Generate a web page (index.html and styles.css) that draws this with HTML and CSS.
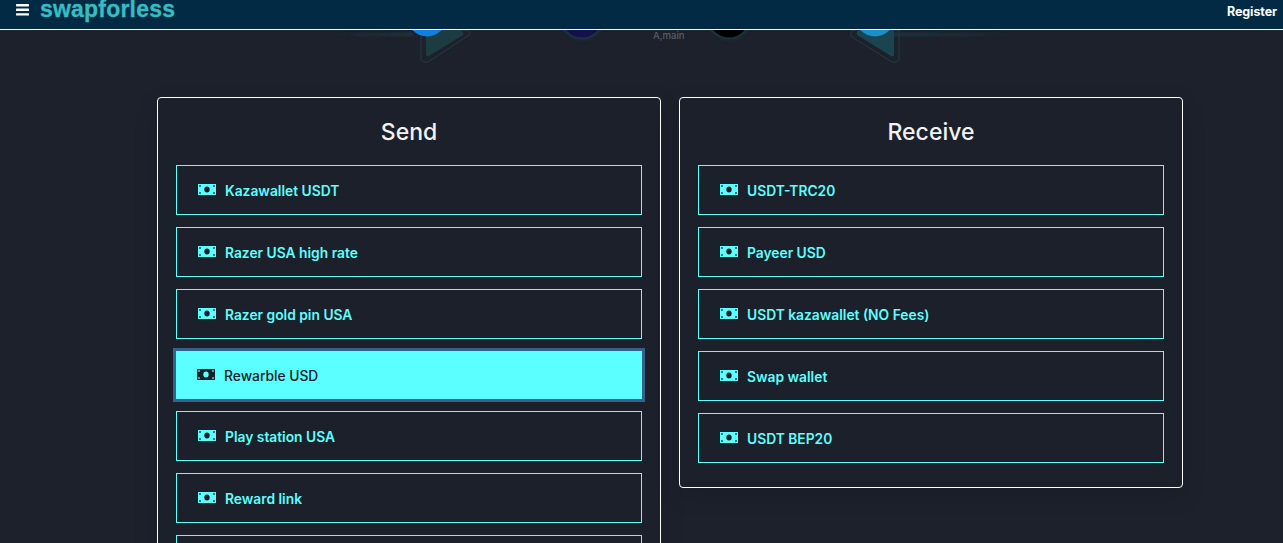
FILE: index.html
```html
<!DOCTYPE html>
<html lang="en">
<head>
<meta charset="utf-8">
<title>swapforless</title>
<link rel="stylesheet" href="styles.css">
</head>
<body>
<svg class="defs" width="0" height="0" aria-hidden="true">
  <symbol id="bill" viewBox="0 0 18 11">
    <path fill-rule="evenodd" d="M0 0h18v11H0zM9 2.600a2.700 2.900 0 1 0 0 5.800 2.700 2.900 0 0 0 0-5.800zM1.200 1.200v1.600h1.600V1.200zM15.200 1.200v1.600h1.600V1.200zM1.200 8.200v1.600h1.600V8.200zM15.200 8.200v1.600h1.600V8.200z"/>
  </symbol>
</svg>
<header class="topbar">
  <div class="brand">
    <svg class="burger" viewBox="0 0 13 12" width="13" height="12" aria-hidden="true">
      <rect y="0" width="13" height="2.400" rx=".6"/><rect y="4.600" width="13" height="2.400" rx=".6"/><rect y="9.200" width="13" height="2.400" rx=".6"/>
    </svg>
    <span class="logo">swapforless</span>
  </div>
  <a class="register">Register</a>
</header>
<div class="hero">
  <svg class="hero-art" viewBox="0 0 1283 67" width="1283" height="67" aria-hidden="true">
    <defs>
      <filter id="soft" x="-30%" y="-30%" width="160%" height="160%"><feGaussianBlur stdDeviation="2"/></filter>
      <filter id="softer" x="-10%" y="-300%" width="120%" height="700%"><feGaussianBlur stdDeviation="1.500"/></filter>
      <linearGradient id="fadeL" x1="0" x2="1" y1="0" y2="0"><stop offset="0" stop-color="#1f4a52" stop-opacity="0"/><stop offset="1" stop-color="#1f4a52" stop-opacity=".6"/></linearGradient>
      <linearGradient id="fadeR" x1="1" x2="0" y1="0" y2="0"><stop offset="0" stop-color="#1f4a52" stop-opacity="0"/><stop offset="1" stop-color="#1f4a52" stop-opacity=".6"/></linearGradient>
    </defs>
    <rect x="335" y="3" width="78" height="3" fill="url(#fadeL)" filter="url(#softer)"/>
    <rect x="893" y="3" width="120" height="3" fill="url(#fadeR)" filter="url(#softer)"/>
    <path d="M421 0V29Q421 33 428 32L469 5Q472 1 467 0Z" fill="none" stroke="#263a40" stroke-width="1"/>
    <path d="M426 0V25Q426 27 429 26L463 5Q465 2 460 0Z" fill="#1c3c42"/>
    <path d="M899 0V29Q899 33 892 32L852 7Q849 2 853 0Z" fill="none" stroke="#263a40" stroke-width="1"/>
    <path d="M894 0V25Q894 27 891 26L857 5Q855 2 860 0Z" fill="#1a4550"/>
    <circle cx="427" cy="-13" r="19.500" fill="#0f7fe0"/>
    <circle cx="875" cy="-13" r="19.500" fill="#1b8fca"/>
    <circle cx="582" cy="-13" r="21" fill="#1f6a72" opacity=".6" filter="url(#soft)"/>
    <circle cx="582" cy="-13" r="20.500" fill="#140f4d"/>
    <circle cx="729" cy="-13" r="21" fill="#1f6a72" opacity=".6" filter="url(#soft)"/>
    <circle cx="729" cy="-13" r="20.500" fill="#000"/>
  </svg>
  <span class="hero-label">A,main</span>
</div>
<main class="panels">
  <section class="card">
    <h2 class="card-title">Send</h2>
    <ul class="options">
      <li class="option"><svg class="bill"><use href="#bill"/></svg>Kazawallet USDT</li>
      <li class="option"><svg class="bill"><use href="#bill"/></svg>Razer USA high rate</li>
      <li class="option"><svg class="bill"><use href="#bill"/></svg>Razer gold pin USA</li>
      <li class="option option-active"><svg class="bill"><use href="#bill"/></svg>Rewarble USD</li>
      <li class="option"><svg class="bill"><use href="#bill"/></svg>Play station USA</li>
      <li class="option"><svg class="bill"><use href="#bill"/></svg>Reward link</li>
      <li class="option"></li>
    </ul>
  </section>
  <section class="card">
    <h2 class="card-title">Receive</h2>
    <ul class="options">
      <li class="option"><svg class="bill"><use href="#bill"/></svg>USDT-TRC20</li>
      <li class="option"><svg class="bill"><use href="#bill"/></svg>Payeer USD</li>
      <li class="option"><svg class="bill"><use href="#bill"/></svg>USDT kazawallet (NO Fees)</li>
      <li class="option"><svg class="bill"><use href="#bill"/></svg>Swap wallet</li>
      <li class="option"><svg class="bill"><use href="#bill"/></svg>USDT BEP20</li>
    </ul>
  </section>
</main>
</body>
</html>
```
FILE: styles.css
```css
* { box-sizing: border-box; }
html, body { height: 100%; overflow: hidden; }
body {
  margin: 0;
  background: #1c212b;
  font-family: Inter, "Open Sans", sans-serif;
  color: #fff;
}
.defs { display: block; height: 0; }
.topbar {
  height: 30px;
  background: #022a45;
  border-bottom: 1px solid #fff;
  display: flex;
  align-items: flex-start;
  justify-content: space-between;
  padding: 0 6px 0 16px;
}
.brand { display: flex; align-items: flex-start; gap: 11px; }
.burger { fill: #fff; margin-top: 4px; }
.logo {
  font-family: "Liberation Sans", Arial, sans-serif;
  font-weight: 700;
  font-size: 23px;
  line-height: 19px;
  letter-spacing: .2px;
  color: #35bdc3;
  -webkit-text-stroke: .3px #35bdc3;
}
.register { font-size: 12.500px; font-weight: 700; line-height: 16px; margin-top: 4px; letter-spacing: -.1px; }
.hero { height: 67px; position: relative; overflow: hidden; }
.hero-art { position: absolute; left: 0; top: 0; }
.hero-label {
  position: absolute;
  left: 653px;
  top: 0;
  font-size: 9.500px;
  line-height: 11px;
  color: #5a5e68;
  font-weight: 500;
}
.panels {
  display: flex;
  justify-content: center;
  align-items: flex-start;
  gap: 18px;
  padding-left: 57px;
}
.card {
  width: 504px;
  flex: none;
  border: 1px solid #fff;
  border-radius: 4px;
  padding: 18px 18px 24px;
  background: #1b202b;
  box-shadow: 0 8px 24px rgba(0, 0, 0, .12);
}
.card-title {
  margin: 0 0 17px;
  font-size: 23px;
  line-height: 32px;
  font-weight: 500;
  text-align: center;
  color: #f2f2f2;
}
.options {
  list-style: none;
  margin: 0;
  padding: 0;
  display: flex;
  flex-direction: column;
  gap: 12px;
}
.option {
  height: 50px;
  flex: none;
  border: 1px solid #5cffff;
  display: flex;
  align-items: center;
  padding: 2px 21px 0;
  gap: 9px;
  font-size: 13.800px;
  font-weight: 600;
  color: #5cffff;
}
.bill { width: 18px; height: 11px; fill: currentColor; margin-top: -3px; flex: none; }
.option-active {
  height: 48px;
  background: #5cffff;
  color: #1b202b;
  font-weight: 500;
  border: 0;
  box-shadow: 0 0 0 3px #35628a;
}
```
